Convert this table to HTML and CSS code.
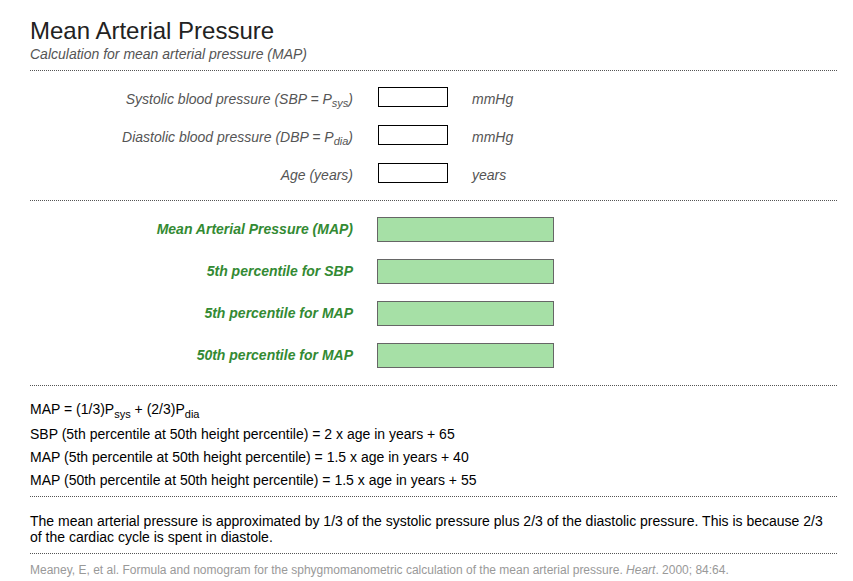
FILE: index.html
```html
<!DOCTYPE html>
<html>
<head>
<meta charset="utf-8">
<link rel="stylesheet" href="styles.css">
</head>
<body>
<div class="page">
  <header class="head">
    <h1 class="title">Mean Arterial Pressure</h1>
    <p class="subtitle">Calculation for mean arterial pressure (MAP)</p>
  </header>

  <section class="inputs">
    <div class="row">
      <label class="label">Systolic blood pressure (SBP = P<sub>sys</sub>)</label>
      <input class="field" type="text">
      <span class="unit">mmHg</span>
    </div>
    <div class="row">
      <label class="label">Diastolic blood pressure (DBP = P<sub>dia</sub>)</label>
      <input class="field" type="text">
      <span class="unit">mmHg</span>
    </div>
    <div class="row">
      <label class="label">Age (years)</label>
      <input class="field" type="text">
      <span class="unit">years</span>
    </div>
  </section>

  <section class="results">
    <div class="rrow">
      <span class="rlabel">Mean Arterial Pressure (MAP)</span>
      <div class="rbox"></div>
    </div>
    <div class="rrow">
      <span class="rlabel">5th percentile for SBP</span>
      <div class="rbox"></div>
    </div>
    <div class="rrow">
      <span class="rlabel">5th percentile for MAP</span>
      <div class="rbox"></div>
    </div>
    <div class="rrow">
      <span class="rlabel">50th percentile for MAP</span>
      <div class="rbox"></div>
    </div>
  </section>

  <section class="formulas">
    <div class="fline first">MAP = (1/3)P<sub class="fsub">sys</sub> + (2/3)P<sub class="fsub">dia</sub></div>
    <div class="fline">SBP (5th percentile at 50th height percentile) = 2 x age in years + 65</div>
    <div class="fline">MAP (5th percentile at 50th height percentile) = 1.5 x age in years + 40</div>
    <div class="fline">MAP (50th percentile at 50th height percentile) = 1.5 x age in years + 55</div>
  </section>

  <section class="notes">
    <p class="note">The mean arterial pressure is approximated by 1/3 of the systolic pressure plus 2/3 of the diastolic pressure. This is because 2/3 of the cardiac cycle is spent in diastole.</p>
  </section>

  <section class="refs">
    <p class="ref">Meaney, E, et al. Formula and nomogram for the sphygmomanometric calculation of the mean arterial pressure. <em>Heart</em>. 2000; 84:64.</p>
  </section>
</div>
</body>
</html>
```
FILE: styles.css
```css
html, body {
  margin: 0;
  padding: 0;
  background: #ffffff;
}

body {
  font-family: "Liberation Sans", Arial, Helvetica, sans-serif;
  font-size: 14px;
  color: #000;
}

.page {
  margin-left: 30px;
  width: 807px;
}

.head {
  padding-top: 17px;
  padding-bottom: 7px;
  border-bottom: 1px dotted #555;
}

.title {
  margin: 0;
  font-size: 24px;
  font-weight: normal;
  line-height: 28px;
  color: #222;
}

.subtitle {
  margin: 0;
  font-size: 14px;
  font-style: italic;
  line-height: 18px;
  color: #555;
}

.inputs {
  padding: 16px 0 17px;
  border-bottom: 1px dotted #555;
  display: flex;
  flex-direction: column;
  gap: 18px;
}

.row {
  display: grid;
  grid-template-columns: 323px 70px auto;
  grid-template-rows: 20px;
  column-gap: 25px;
  align-items: start;
  height: 20px;
}

.row .unit {
  margin-left: -1px;
}

.label {
  text-align: right;
  font-style: italic;
  color: #555;
  line-height: 20px;
  padding-top: 2px;
}

.label sub {
  font-size: 11px;
  line-height: 0;
  vertical-align: -3px;
}

.field {
  box-sizing: border-box;
  width: 70px;
  height: 20px;
  margin: 0;
  border: 1px solid #000;
  padding: 0;
  background: #fff;
  font: inherit;
}

.unit {
  font-style: italic;
  color: #555;
  line-height: 20px;
  padding-top: 2px;
}

.results {
  padding: 16px 0 17px;
  border-bottom: 1px dotted #555;
  display: flex;
  flex-direction: column;
  gap: 17px;
}

.rrow {
  display: grid;
  grid-template-columns: 323px 177px;
  column-gap: 24px;
  align-items: center;
}

.rlabel {
  text-align: right;
  font-style: italic;
  font-weight: bold;
  color: #338a33;
  line-height: 25px;
}

.rbox {
  box-sizing: border-box;
  height: 25px;
  border: 1px solid #666;
  background: #a6e0a6;
}

.formulas {
  padding: 12px 0 4px;
  border-bottom: 1px dotted #555;
}

.fline {
  line-height: 23px;
}

.fline.first {
  margin-bottom: 2px;
}

.fsub {
  font-size: 11px;
  line-height: 0;
  vertical-align: -4px;
}

.notes {
  padding: 16px 0 8px;
  border-bottom: 1px dotted #555;
}

.note {
  margin: 0;
  line-height: 16px;
}

.refs {
  padding-top: 8px;
}

.ref {
  margin: 0;
  font-size: 12px;
  line-height: 16px;
  color: #999;
}
```
